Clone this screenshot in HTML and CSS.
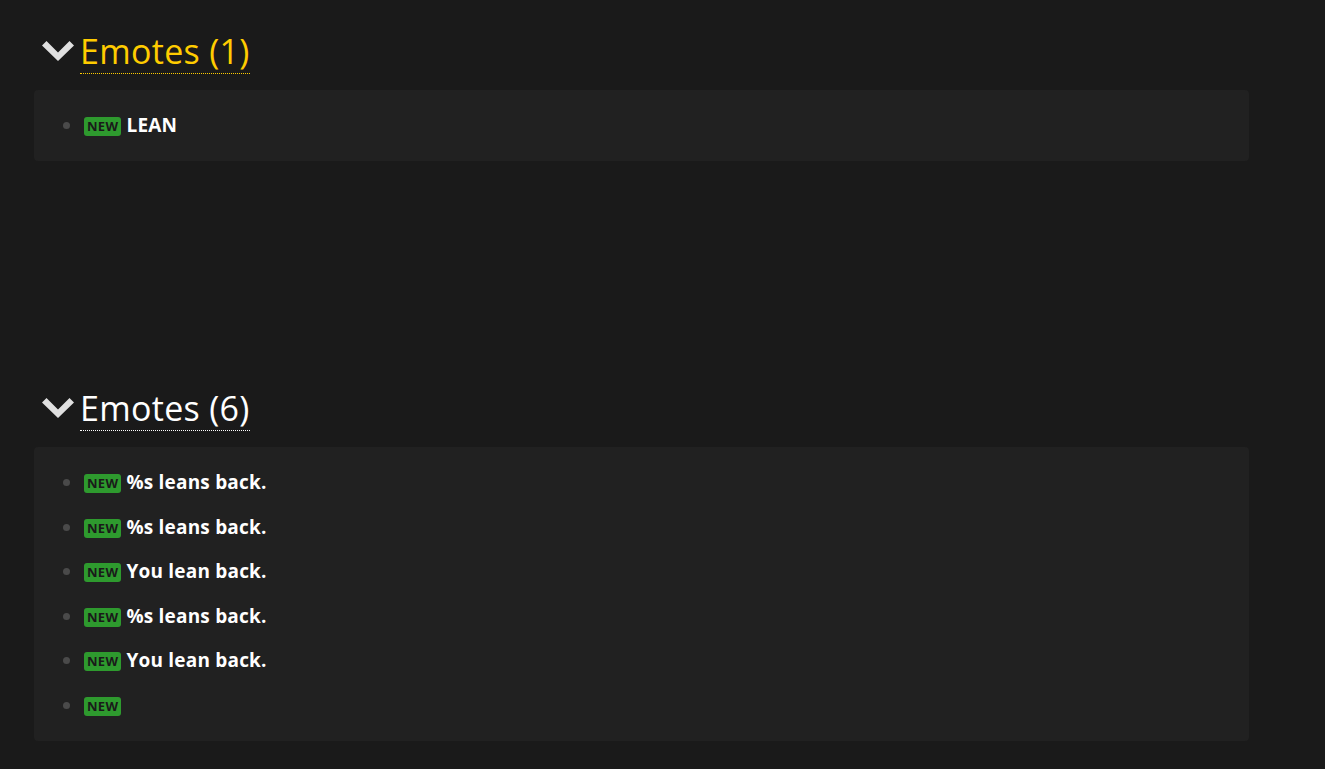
FILE: index.html
```html
<!DOCTYPE html>
<html lang="en">
<head>
    <meta charset="UTF-8">
    <title>Emotes</title>
    <link rel="stylesheet" href="styles.css">
</head>
<body>
    <div class="page">
        <!-- Sección 1 -->
        <section class="section">
            <h2 class="section-title">
                <svg class="chevron" viewBox="0 0 32 20" width="32" height="20"><path d="M0 4.5 L4.5 0 L16 11.5 L27.5 0 L32 4.5 L16 20 Z" fill="#e0e0e0"/></svg>
                <span class="title-text highlight">Emotes (1)</span>
            </h2>
            <div class="panel">
                <ul class="list">
                    <li><span class="badge">NEW</span> LEAN</li>
                </ul>
            </div>
        </section>

        <!-- Sección 2 -->
        <section class="section">
            <h2 class="section-title">
                <svg class="chevron" viewBox="0 0 32 20" width="32" height="20"><path d="M0 4.5 L4.5 0 L16 11.5 L27.5 0 L32 4.5 L16 20 Z" fill="#e0e0e0"/></svg>
                <span class="title-text">Emotes (6)</span>
            </h2>
            <div class="panel">
                <ul class="list">
                    <li><span class="badge">NEW</span> %s leans back.</li>
                    <li><span class="badge">NEW</span> %s leans back.</li>
                    <li><span class="badge">NEW</span> You lean back.</li>
                    <li><span class="badge">NEW</span> %s leans back.</li>
                    <li><span class="badge">NEW</span> You lean back.</li>
                    <li><span class="badge">NEW</span></li>
                </ul>
            </div>
        </section>
    </div>
</body>
</html>
```

FILE: styles.css
```css
body {
    margin: 0;
    background-color: #1a1a1a;
    color: #ffffff;
    font-family: "Open Sans", "Liberation Sans", sans-serif;
}

.page {
    width: 1215px;
    padding: 29px 0 0 34px;
}

.section {
    height: 357px; /* alto fijo de cada bloque */
}

.section-title {
    display: flex;
    align-items: center;
    gap: 6px;
    margin: 0 0 16px 8px;
    font-size: 34px;
    font-weight: normal;
    letter-spacing: 0.3px;
    line-height: 48px;
}

.chevron {
    flex: none;
    margin-top: -2px;
}

.title-text {
    border-bottom: 1px dotted #ffffff;
    line-height: 44px;
}

.title-text.highlight {
    color: #ffcc00;
    border-bottom-color: #ffcc00;
}

.panel {
    background-color: #212121;
    border-radius: 4px;
    padding: 13px 0;
}

.list {
    margin: 0;
    padding: 0 0 0 50px;
    list-style: none;
}

.list li {
    position: relative;
    font-size: 19px;
    font-weight: bold;
    letter-spacing: 0.2px;
    line-height: 28.6px;
    padding: 8px 0;
}

/* viñeta gris */
.list li::before {
    content: "";
    position: absolute;
    left: -21px;
    top: 19px;
    width: 7px;
    height: 7px;
    border-radius: 50%;
    background-color: #4a4a4a;
}

.badge {
    display: inline-block;
    background-color: #2e9a2e;
    color: #1a1a1a;
    font-size: 13px;
    letter-spacing: 0.3px;
    line-height: 19px;
    padding: 0 3px;
    border-radius: 3px;
    vertical-align: 1px;
}
```
